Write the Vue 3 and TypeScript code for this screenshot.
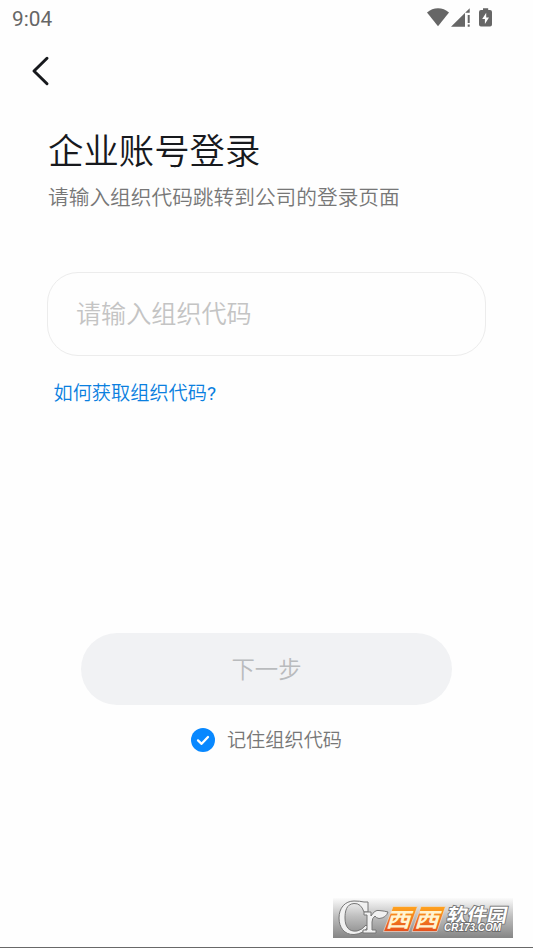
<script setup lang="ts">
import { ref } from 'vue'

const code = ref<string>('')
const remember = ref<boolean>(true)
</script>

<template>
  <main class="screen">
    <header class="status">
      <span class="time">9:04</span>
      <svg class="signals" width="66" height="20" viewBox="0 0 66 20">
        <path d="M0 4.6C6.2-1.3 15.8-1.3 22 4.6L11 18.2Z" />
        <path d="M24 18.7L42.7.2V4.8H38V18.7Z" />
        <path d="M40.7 7h2v8h-2zM40.7 16.6h2v2.1h-2z" />
        <path d="M56 .2h5.2v1.7H63q2 0 2 2V16.600q0 2-2 2h-9q-2 0-2-2V3.900q0-2 2-2h2z" />
        <path d="M59.200 4.700v4.700H62L57.900 16v-5h-2.700z" fill="#fff" />
      </svg>
    </header>

    <nav class="nav">
      <svg width="20" height="32" viewBox="0 0 20 32">
        <path d="M16 3.300L3 16L16 28.700" fill="none" stroke="#17191d" stroke-width="3" stroke-linecap="round" stroke-linejoin="round" />
      </svg>
    </nav>

    <section class="form">
      <h1>企业账号登录</h1>
      <p class="hint">请输入组织代码跳转到公司的登录页面</p>
      <input v-model="code" class="field" type="text" placeholder="请输入组织代码" />
      <a class="help">如何获取组织代码<span class="mark-q">?</span></a>
    </section>

    <section class="actions">
      <button class="next" type="button">下一步</button>
      <div class="remember" @click="remember = !remember">
        <svg width="24" height="24" viewBox="0 0 24 24">
          <circle cx="12" cy="12" r="12" fill="#0888ff" />
          <path v-if="remember" d="M7 12.400L10.600 15.800L17 9" fill="none" stroke="#fff" stroke-width="2.300" stroke-linecap="round" stroke-linejoin="round" />
        </svg>
        <span class="label">记住组织代码</span>
      </div>
    </section>

    <footer class="foot">
      <svg class="mark" width="180" height="40" viewBox="0 0 180 40">
        <defs>
          <linearGradient id="plate" x1="0" y1="0" x2="0" y2="1">
            <stop offset="0" stop-color="#fbfbfb" />
            <stop offset=".45" stop-color="#c0c0c0" />
            <stop offset="1" stop-color="#858585" />
          </linearGradient>
          <linearGradient id="orange" x1="0" y1="0" x2="0" y2="1">
            <stop offset="0" stop-color="#ffa41f" />
            <stop offset="1" stop-color="#e64f1c" />
          </linearGradient>
        </defs>
        <rect width="180" height="40" fill="url(#plate)" />
        <g fill="#f1f1f1" stroke="#777" stroke-width="1" stroke-linejoin="round">
          <path d="M31 4H35V14H31Q28 5 21 5.500C13 6 12 14 12 20C12 29 16 34 24 33Q29 32 33 27L35 29Q30 36 21 36.500C11 37 6 29 6 20C6 10 12 3 21 3Q27 3 31 4Z" />
          <path d="M31 14H38V18Q42 11.500 46 12.500Q52 13 55 14Q53 20 46 20.500Q43 20 42 18Q39 20 39 24V32H43V35H30V32H34V17H31Z" />
        </g>
        <path d="M60 8.500H84.500L75.500 33.500H50.500Z" fill="url(#orange)" stroke="#e9ded5" stroke-width=".7" />
        <path d="M88 8.500H112.500L104 33.500H79Z" fill="url(#orange)" stroke="#e9ded5" stroke-width=".7" />
        <g class="xixi">
          <text transform="translate(52.500 28.500) skewX(-17) scale(1.220 1)">西</text>
          <text transform="translate(81 28.500) skewX(-17) scale(1.220 1)">西</text>
        </g>
        <g class="park" transform="translate(0 23.500) skewX(-12)">
          <text x="113" y="0" textLength="60" lengthAdjust="spacingAndGlyphs">软件园</text>
        </g>
        <text class="domain" x="111" y="33" textLength="57" lengthAdjust="spacingAndGlyphs">CR173.COM</text>
      </svg>
    </footer>
  </main>
</template>

<style>
body {
  background: #fefefe;
}
</style>

<style scoped>
.screen {
  box-sizing: border-box;
  width: 533px;
  height: 948px;
  overflow: hidden;
  display: flex;
  flex-direction: column;
  background: #fefefe;
  border-bottom: 1px solid #686868;
  font-family: Roboto, "Noto Sans CJK SC", sans-serif;
  font-weight: 350;
}
.status {
  display: flex;
  justify-content: space-between;
  padding: 8px 40px 0 12px;
  height: 30px;
}
.time {
  font-size: 20.8px;
  line-height: 22px;
  font-weight: 400;
  color: #666;
}
.signals {
  fill: #666;
}
.nav {
  padding: 17px 0 0 31px;
  height: 32px;
}
.form {
  display: flex;
  flex-direction: column;
  align-items: flex-start;
  padding: 39px 47px 0 48px;
}
h1 {
  margin: 0;
  font-size: 35.4px;
  line-height: 52px;
  font-weight: 350;
  color: #17191d;
}
.hint {
  margin: 5px 0 0;
  font-size: 20.7px;
  line-height: 30px;
  color: #777;
}
.field {
  box-sizing: border-box;
  width: 439px;
  height: 84px;
  margin: 59px 0 0 -1px;
  padding: 1px 27px 0 28px;
  border: 1px solid #ececec;
  border-radius: 31px;
  outline: none;
  background: transparent;
  font: inherit;
  font-size: 25.1px;
  color: #17191d;
}
.field::placeholder {
  color: #c4c4c4;
  opacity: 1;
}
.help {
  margin: 24px 0 0 5.5px;
  font-size: 19.2px;
  line-height: 28px;
  color: #0a7fdf;
}
.mark-q {
  font-weight: 400;
}
.actions {
  display: flex;
  flex-direction: column;
  align-items: center;
  margin-top: 225px;
}
.next {
  width: 371px;
  height: 72px;
  padding: 0 0 3px;
  border: 0;
  border-radius: 36px;
  background: #f1f2f4;
  font: inherit;
  font-size: 23.4px;
  color: #b9bbbd;
}
.remember {
  display: flex;
  align-items: center;
  gap: 12px;
  margin-top: 20px;
  font-size: 19.2px;
  line-height: 28px;
  color: #777;
}
.label {
  padding-top: 2px;
}
.foot {
  display: flex;
  justify-content: flex-end;
  margin-top: auto;
  padding: 0 20px 9px 0;
}
.xixi {
  font: 700 20px "Noto Sans CJK SC", sans-serif;
  fill: #fff3d0;
}
.park {
  font: 700 19px "Noto Sans CJK SC", sans-serif;
  fill: #fff;
  stroke: #777;
  stroke-width: 1.8px;
  paint-order: stroke;
}
.domain {
  font: italic 700 11.5px "Liberation Sans", sans-serif;
  fill: #fff;
  stroke: #6c6c6c;
  stroke-width: 1.8px;
  paint-order: stroke;
}
</style>
